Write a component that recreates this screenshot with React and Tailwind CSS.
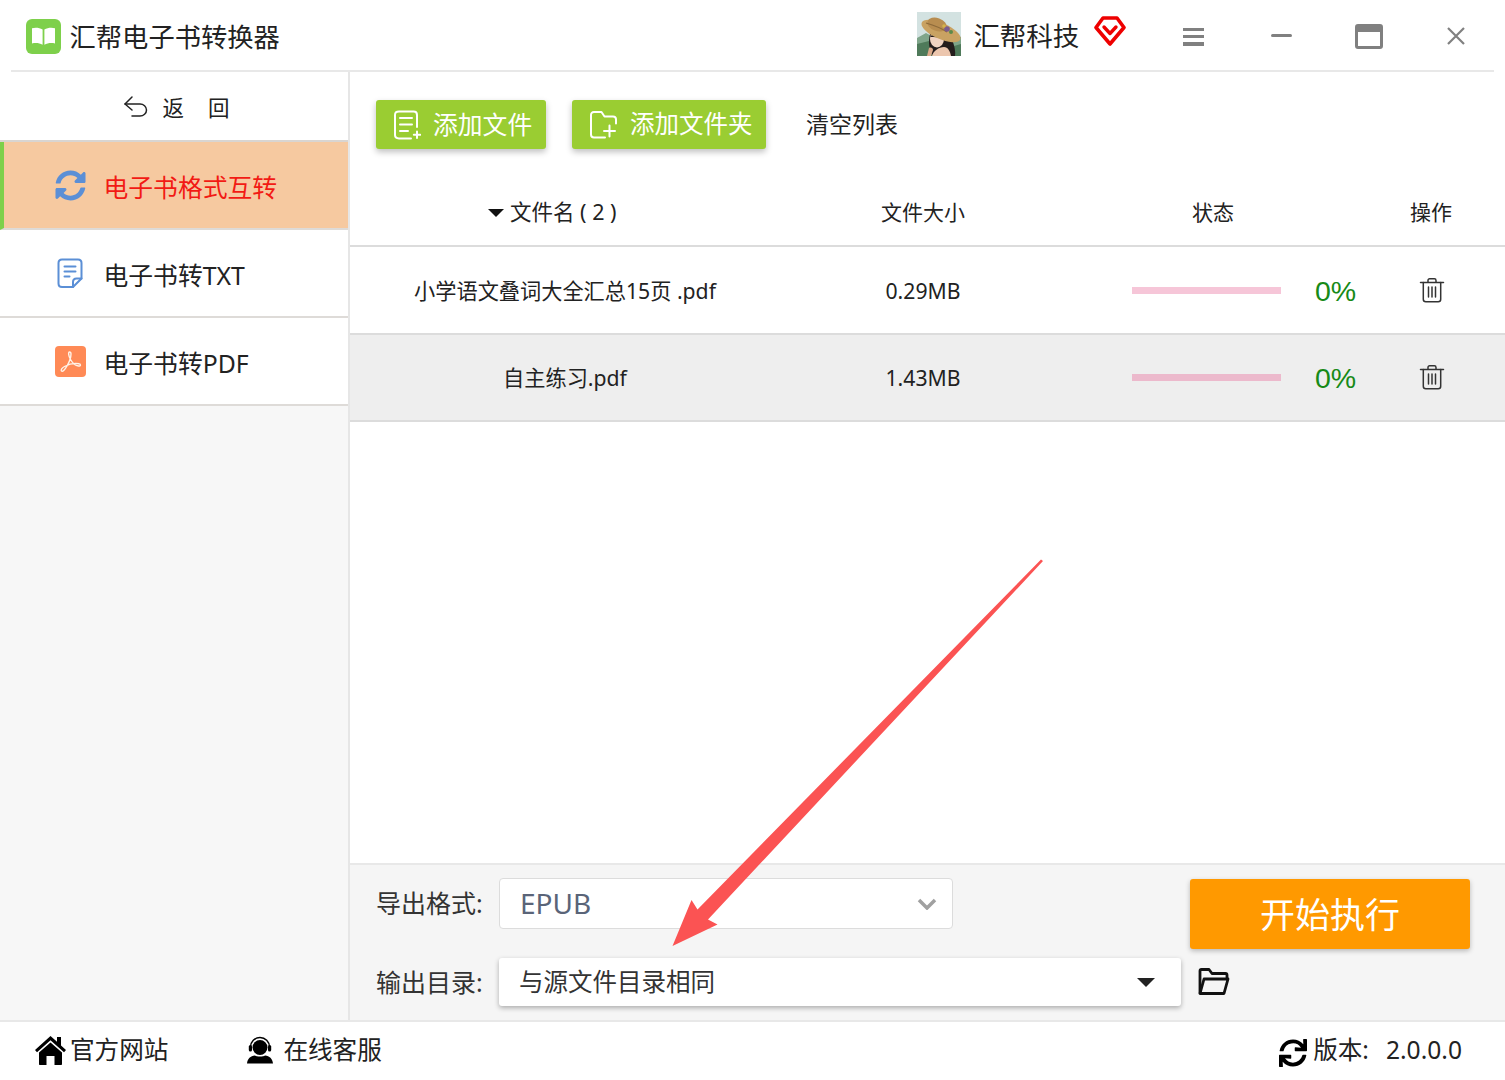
import React from "react";
import { FaSync, FaSyncAlt } from "react-icons/fa";

const Trash = () => (
  <svg width="26" height="26" viewBox="0 0 26 26" fill="none" stroke="#333" strokeWidth="1.5" strokeLinecap="round" strokeLinejoin="round">
    <path d="M1.5 5.5h23" />
    <path d="M9 5.2V3.4c0-1 .7-1.6 1.6-1.6h4.8c.9 0 1.6.6 1.6 1.6v1.8" />
    <path d="M4.3 5.6v16.6c0 1.6 1 2.5 2.5 2.5h12.4c1.5 0 2.5-.9 2.5-2.5V5.6" />
    <path d="M9.5 10v10M13 10v10M16.5 10v10" />
  </svg>
);

const Logo = () => (
  <div className="w-[35px] h-[35px] rounded-[6px] bg-[#7ed04b] flex items-center justify-center">
    <svg width="25" height="22" viewBox="0 0 25 22" fill="#fff">
      <path d="M1 3.2c3.5-1 7.4-.6 10.6 1.4v15.2C8.4 18 4.5 17.7 1 18.6z" />
      <path d="M24 3.2c-3.5-1-7.4-.6-10.6 1.4v15.2c3.2-1.8 7.1-2.1 10.6-1.2z" />
    </svg>
  </div>
);

const Avatar = () => (
  <svg width="44" height="44" viewBox="0 0 44 44" className="shrink-0">
    <rect width="44" height="44" fill="#d3e2e1" />
    <path d="M0 26 L9 21 L20 27 L34 21 L44 25 V44 H0z" fill="#7fa58a" />
    <path d="M0 32 L12 29 L30 36 L44 32 V44 H0z" fill="#4f7a5a" />
    <path d="M13 22c-2 8-1 16 3 22h22c1-6-2-16-6-22z" fill="#241c1c" />
    <path d="M15 44c1-5 7-9 12-9 4 0 6 4 7 9z" fill="#ecc6ae" />
    <ellipse cx="20" cy="27" rx="7" ry="8.500" fill="#f1d3c1" />
    <path d="M13 25c2-3 9-5 15-2l-3 3c-3-1-8-1-12-1z" fill="#241c1c" />
    <path d="M12 36c2-1 4 0 4 2l-2 6h-4z" fill="#dca98a" />
    <ellipse cx="24" cy="19" rx="21" ry="8" transform="rotate(24 24 19)" fill="#c9a262" />
    <ellipse cx="20" cy="12.500" rx="10" ry="6.500" transform="rotate(20 20 12.500)" fill="#b88d50" />
    <path d="M9 11c7 2 15 5 21 9" stroke="#8d6a3a" strokeWidth="1.300" fill="none" />
    <circle cx="30" cy="17" r="2.800" fill="#7a5b8e" />
    <circle cx="34" cy="20" r="2" fill="#5d8a4a" />
    <circle cx="27" cy="14" r="1.800" fill="#d4b24a" />
  </svg>
);

const Diamond = () => (
  <svg width="32" height="32" viewBox="0 0 32 32" fill="none" stroke="#ee0000" strokeLinejoin="round">
    <path d="M9 3h14l7 9.500L16 29 2 12.500z" strokeWidth="3.600" />
    <path d="M10 12l6 6.500 6-6.500" strokeWidth="3.400" strokeLinecap="round" />
  </svg>
);

const AddDoc = () => (
  <svg width="28" height="30" viewBox="0 0 28 30" fill="none" stroke="#fff" strokeWidth="2" strokeLinecap="round" strokeLinejoin="round">
    <path d="M24 17V5c0-2-1.400-3.400-3.400-3.400H6C3.400 1.600 2 3 2 5v20c0 2 1.400 3.400 4 3.400h12" />
    <path d="M7 8h12M7 14.500h12M7 21h8" />
    <path d="M24 21.500v6.500M20.800 24.800h6.400" />
  </svg>
);

const AddFolder = () => (
  <svg width="30" height="30" viewBox="0 0 30 30" fill="none" stroke="#fff" strokeWidth="2" strokeLinecap="round" strokeLinejoin="round">
    <path d="M16 27.500H5c-2 0-3-1.200-3-3V5c0-1.800 1-3 3-3h7.500l3 4.500H24c2 0 3 1.200 3 3v4" />
    <path d="M20.500 15.500v11M15 21h11" />
  </svg>
);

const TxtIcon = () => (
  <svg width="26" height="30" viewBox="0 0 26 30" fill="none" stroke="#5b8fd6" strokeWidth="2" strokeLinecap="round" strokeLinejoin="round">
    <path d="M16 29H5c-2 0-3.500-1.300-3.500-3.500V5C1.500 2.800 3 1.500 5 1.500h16c2 0 3.500 1.300 3.500 3.500v15.500L16 29z" />
    <path d="M16 29v-5c0-2 1.500-3.500 3.500-3.500h5" />
    <path d="M7.500 8.500h11M7.500 13.500h11M7.500 18.500h5" />
  </svg>
);

const PdfIcon = () => (
  <div className="w-[31px] h-[31px] rounded-[4px] bg-[#ff8a56] flex items-center justify-center">
    <svg width="23" height="23" viewBox="0 0 23 23" fill="none" stroke="#fff2e8" strokeWidth="1.400" strokeLinejoin="round">
      <path d="M10.500 2c-1.500 0 -1 4 1 7.500 2 3.500 4.500 6 8 6.500 2.500.3 2.500-2 .5-2.300-4-.7-9-.2-14.500 2.800C3 18 1.500 20 2.500 21c1.200 1 3.500-1.500 5.500-5 2-3.500 4-9.500 4-12 0-1.200-.5-2-1.500-2z" />
    </svg>
  </div>
);

const FolderOpen = () => (
  <svg width="32" height="28" viewBox="0 0 32 28" fill="none" stroke="#111" strokeWidth="2.800" strokeLinejoin="round" className="shrink-0">
    <path d="M2 25.500V3c0-.8.500-1.500 1.500-1.500h7.500l3 4h13.500c.8 0 1.500.7 1.500 1.500v3.500" />
    <path d="M2 25.500l4-14.500h24l-4 14.500z" />
  </svg>
);

const Home = () => (
  <svg width="31" height="29" viewBox="0 0 31 29" className="shrink-0" fill="#000">
    <path d="M15.500 0 L22 5.800 V1 H26 V9.400 L31 14 L29 16.300 L15.500 4.300 L2 16.300 L0 14z" />
    <path d="M15.500 6.500 L27 16.500 V28 C27 28.600 26.600 29 26 29 H19.500 V20 H11.500 V29 H5 C4.400 29 4 28.600 4 28 V16.500z" />
  </svg>
);

const Headset = () => (
  <svg width="28" height="28" viewBox="0 0 28 28" className="shrink-0">
    <circle cx="14" cy="11.500" r="7.500" fill="#000" />
    <path d="M4.500 13V11a9.500 9.500 0 0 1 19 0v2" fill="none" stroke="#000" strokeWidth="1.500" />
    <rect x="2.800" y="9" width="3.200" height="6.500" rx="1.500" fill="#000" />
    <rect x="22" y="9" width="3.200" height="6.500" rx="1.500" fill="#000" />
    <path d="M1 27.500c.5-5 3.500-7.500 8-8 1.500 1.400 8.500 1.400 10 0 4.500.5 7.500 3 8 8z" fill="#000" />
  </svg>
);

const NavItem = ({ icon, label, active }) => (
  <div className={"h-[88px] flex items-center border-b-2 border-[#dedbd8] " + (active ? "bg-[#f6c9a0] border-l-[4px] border-l-[#7ed04b] pl-[50px]" : "bg-white pl-[54px]")}>
    <div className="w-[32px] flex justify-center shrink-0">{icon}</div>
    <span className={"ml-[17.500px] mt-[4px] text-[24.800px] leading-none " + (active ? "text-[#f21a14]" : "text-[#222]")}>{label}</span>
  </div>
);

const FileRow = ({ name, size, bar, bg, pct }) => (
  <div className={"grid grid-cols-[430px_286px_294px_145px] items-center h-[87.500px] border-b-2 border-[#dcdcdc] " + bg}>
    <div className="text-center text-[21.200px] text-[#222] mt-[2px]">{name}</div>
    <div className="text-center text-[21.200px] text-[#222] mt-[2px]">{size}</div>
    <div className="flex items-center pl-[66px]">
      <div className={"w-[149px] h-[7px] mt-[1px] " + bar} />
      <span className={"ml-[34px] text-[28.500px] leading-none text-[#178a17] [font-family:'Liberation_Sans',sans-serif] " + pct}>0%</span>
    </div>
    <div className="flex justify-center pr-[2px]"><Trash /></div>
  </div>
);

export default function App() {
  return (
    <div className="relative w-[1505px] h-[1080px] overflow-hidden bg-white flex flex-col text-[#222] [font-family:'Noto_Sans','Noto_Sans_CJK_SC',sans-serif]">
      {/* Title bar */}
      <header className="h-[72px] mx-[11px] border-b-2 border-[#e8e8e8] flex items-center shrink-0">
        <div className="ml-[15px] mt-[2px]"><Logo /></div>
        <span className="ml-[8.500px] text-[26.300px] leading-none text-[#222] mt-[5px]">汇帮电子书转换器</span>
        <div className="ml-[637px] -mt-[2px]"><Avatar /></div>
        <span className="ml-[12.500px] text-[26.500px] leading-none mt-[2px]">汇帮科技</span>
        <div className="ml-[15px] -mt-[8px]"><Diamond /></div>
        <div className="ml-[57px] w-[21px] h-[18px] flex flex-col justify-between mt-[3px]">
          <div className="h-[3.500px] bg-[#808080]" />
          <div className="h-[3.500px] bg-[#808080]" />
          <div className="h-[3.500px] bg-[#808080]" />
        </div>
        <div className="ml-[67px] w-[21px] h-[3.500px] rounded-full bg-[#808080] mt-[1px]" />
        <div className="ml-[63px] w-[28px] h-[25px] rounded-[3px] border-[3px] border-[#808080] border-t-[8px] mt-[3px]" />
        <svg width="18" height="18" viewBox="0 0 18 18" stroke="#808080" strokeWidth="2.200" className="ml-[64px] mt-[1px]">
          <path d="M1 1l16 16M17 1L1 17" />
        </svg>
      </header>

      {/* Body */}
      <div className="flex flex-1 min-h-0">
        <aside className="w-[350px] shrink-0 bg-[#f7f7f7] border-r-2 border-[#e6e6e6] flex flex-col">
          <div className="h-[70px] bg-white border-b-2 border-[#d9d5d1] flex items-center justify-center pl-[5px]">
            <svg width="26" height="24" viewBox="0 0 26 24" fill="none" stroke="#222" strokeWidth="1.500" strokeLinecap="round" strokeLinejoin="round" className="mt-[2px]">
              <path d="M9 2L2 9l7 6" />
              <path d="M2 9h15c3.500 0 6.500 2.500 6.500 6s-3 6-6.500 6H9" />
            </svg>
            <span className="ml-[13px] mt-[4px] text-[21.500px] leading-none">返</span>
            <span className="ml-[24px] mt-[4px] text-[21.500px] leading-none">回</span>
          </div>
          <NavItem active label="电子书格式互转" icon={<FaSyncAlt size={31} color="#5b8fd6" />} />
          <NavItem label="电子书转TXT" icon={<TxtIcon />} />
          <NavItem label="电子书转PDF" icon={<PdfIcon />} />
        </aside>

        <main className="flex-1 min-w-0 flex flex-col">
          <div className="h-[104px] shrink-0 flex items-start pl-[26px] pt-[28px]">
            <button className="w-[170px] h-[49px] rounded-[3px] bg-[#9acd32] shadow-[0_3px_6px_rgba(0,0,0,0.25)] flex items-center pl-[17px] text-white">
              <AddDoc />
              <span className="ml-[12px] text-[24.800px] leading-none">添加文件</span>
            </button>
            <button className="ml-[26px] w-[194px] h-[49px] rounded-[3px] bg-[#9acd32] shadow-[0_3px_6px_rgba(0,0,0,0.25)] flex items-center pl-[17px] text-white">
              <AddFolder />
              <span className="ml-[11px] text-[24.500px] leading-none">添加文件夹</span>
            </button>
            <span className="ml-[40px] mt-[9px] text-[23px] leading-[30px]">清空列表</span>
          </div>

          <div className="h-[71px] shrink-0 grid grid-cols-[430px_286px_294px_145px] items-center border-b-2 border-[#dcdcdc] text-[21px]">
            <div className="flex items-center mt-[4px] pl-[138px]">
              <span className="w-0 h-0 border-x-[8px] border-x-transparent border-t-[8px] border-t-[#111] mr-[6px]" />
              <span className="whitespace-pre text-[21.500px]">文件名 ( 2 )</span>
            </div>
            <div className="text-center mt-[4px]">文件大小</div>
            <div className="text-center mt-[4px]">状态</div>
            <div className="text-center mt-[4px] pr-[3px]">操作</div>
          </div>

          <FileRow name="小学语文叠词大全汇总15页 .pdf" size="0.29MB" bg="bg-white" bar="bg-[#f6c6d8]" pct="mt-[2px]" />
          <FileRow name="自主练习.pdf" size="1.43MB" bg="bg-[#eeeeee]" bar="bg-[#ecb9cc]" pct="mt-[1px]" />
          <div className="flex-1" />

          <div className="h-[157px] shrink-0 bg-[#f5f5f5] border-t-2 border-[#e8e8e8] pl-[26px] pt-[13px]">
            <div className="flex items-start h-[71px]">
              <span className="w-[123px] mt-[7px] text-[25px] leading-[36px] text-[#333]">导出格式:</span>
              <div className="w-[454px] h-[51px] rounded-[4px] bg-white border border-[#dcdcdc] flex items-center pl-[20px] pr-[15px] justify-between">
                <span className="-mt-[2px] text-[28px] leading-none text-[#5a6478]">EPUB</span>
                <svg width="20" height="12" viewBox="0 0 20 12" fill="none" stroke="#a0a0a0" strokeWidth="3.500"><path d="M2 2l8 8 8-8" /></svg>
              </div>
              <button className="ml-[237px] mt-[1px] w-[280px] h-[70px] rounded-[3px] bg-[#ff9900] shadow-[0_2px_5px_rgba(0,0,0,0.25)] text-white text-[35px] leading-none">开始执行</button>
            </div>
            <div className="flex items-center mt-[9px]">
              <span className="w-[123px] text-[25px] leading-[36px] text-[#333]">输出目录:</span>
              <div className="w-[682px] h-[48px] rounded-[3px] bg-white shadow-[0_2px_5px_rgba(0,0,0,0.3)] flex items-center pl-[20px] pr-[26px] justify-between">
                <span className="text-[24.500px] leading-none text-[#333]">与源文件目录相同</span>
                <span className="w-0 h-0 border-x-[9px] border-x-transparent border-t-[9px] border-t-[#222]" />
              </div>
              <div className="ml-[17px]"><FolderOpen /></div>
            </div>
          </div>
        </main>
      </div>

      {/* Footer */}
      <footer className="h-[60px] shrink-0 border-t-2 border-[#e8e8e8] flex items-center text-[24.600px] leading-none">
        <div className="ml-[35px] flex items-center -mt-[2px]">
          <Home />
          <span className="ml-[4px]">官方网站</span>
        </div>
        <div className="ml-[78px] flex items-center -mt-[2px]">
          <Headset />
          <span className="ml-[9px]">在线客服</span>
        </div>
        <div className="ml-auto mr-[43px] flex items-center -mt-[2px]">
          <FaSync size={28} color="#000" className="mt-[5px]" />
          <span className="ml-[6px]">版本:</span>
          <span className="ml-[17px]">2.0.0.0</span>
        </div>
      </footer>

      {/* Annotation arrow */}
      <svg className="absolute left-0 top-0 pointer-events-none" width="1505" height="1080" viewBox="0 0 1505 1080">
        <path d="M1041 559.500 L1043 561 L708 919.500 L717.500 924.500 L672.500 946 L691.500 900 L697.500 909.500 Z" fill="#fb5353" />
      </svg>
    </div>
  );
}
